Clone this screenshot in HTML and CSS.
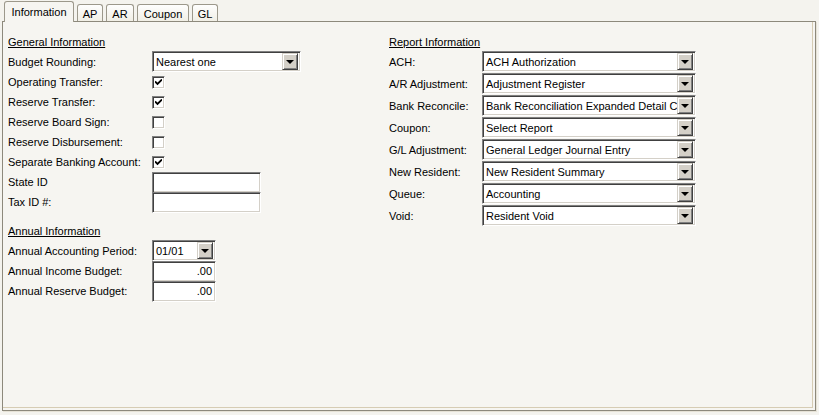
FILE: index.html
```html
<!DOCTYPE html>
<html>
<head>
<meta charset="utf-8">
<link rel="stylesheet" href="styles.css">
</head>
<body>
<div class="window">
  <div class="tabs">
    <div class="tab active t-info">Information</div>
    <div class="tab t-ap">AP</div>
    <div class="tab t-ar">AR</div>
    <div class="tab t-coupon">Coupon</div>
    <div class="tab t-gl">GL</div>
  </div>
  <div class="panel">
    <div class="col left">
      <div class="section">General Information</div>
      <div class="row h21"><span class="lbl">Budget Rounding:</span>
        <div class="select w149"><span class="val">Nearest one</span><span class="btn"><i class="arrow"></i></span></div></div>
      <div class="row h20"><span class="lbl">Operating Transfer:</span><span class="chk"><svg viewBox="0 0 7 7" width="7" height="7"><path d="M0 2.5 L2.5 5 L7 0.5" fill="none" stroke="#000" stroke-width="1.8"/></svg></span></div>
      <div class="row h20"><span class="lbl">Reserve Transfer:</span><span class="chk"><svg viewBox="0 0 7 7" width="7" height="7"><path d="M0 2.5 L2.5 5 L7 0.5" fill="none" stroke="#000" stroke-width="1.8"/></svg></span></div>
      <div class="row h20"><span class="lbl">Reserve Board Sign:</span><span class="chk"></span></div>
      <div class="row h20"><span class="lbl">Reserve Disbursement:</span><span class="chk"></span></div>
      <div class="row h20"><span class="lbl">Separate Banking Account:</span><span class="chk"><svg viewBox="0 0 7 7" width="7" height="7"><path d="M0 2.5 L2.5 5 L7 0.5" fill="none" stroke="#000" stroke-width="1.8"/></svg></span></div>
      <div class="row h20"><span class="lbl">State ID</span><span class="input w109"></span></div>
      <div class="row h20"><span class="lbl">Tax ID #:</span><span class="input w109"></span></div>
      <div class="section s2">Annual Information</div>
      <div class="row h21"><span class="lbl">Annual Accounting Period:</span>
        <div class="select w64"><span class="val">01/01</span><span class="btn"><i class="arrow"></i></span></div></div>
      <div class="row h20"><span class="lbl">Annual Income Budget:</span><span class="input w64 num">.00</span></div>
      <div class="row h20"><span class="lbl">Annual Reserve Budget:</span><span class="input w64 num">.00</span></div>
    </div>
    <div class="col right">
      <div class="section">Report Information</div>
      <div class="row h22"><span class="lbl">ACH:</span><div class="select w214"><span class="val">ACH Authorization</span><span class="btn"><i class="arrow"></i></span></div></div>
      <div class="row h22"><span class="lbl">A/R Adjustment:</span><div class="select w214"><span class="val">Adjustment Register</span><span class="btn"><i class="arrow"></i></span></div></div>
      <div class="row h22"><span class="lbl">Bank Reconcile:</span><div class="select w214"><span class="val">Bank Reconciliation Expanded Detail Con</span><span class="btn"><i class="arrow"></i></span></div></div>
      <div class="row h22"><span class="lbl">Coupon:</span><div class="select w214"><span class="val">Select Report</span><span class="btn"><i class="arrow"></i></span></div></div>
      <div class="row h22"><span class="lbl">G/L Adjustment:</span><div class="select w214"><span class="val">General Ledger Journal Entry</span><span class="btn"><i class="arrow"></i></span></div></div>
      <div class="row h22"><span class="lbl">New Resident:</span><div class="select w214"><span class="val">New Resident Summary</span><span class="btn"><i class="arrow"></i></span></div></div>
      <div class="row h22"><span class="lbl">Queue:</span><div class="select w214"><span class="val">Accounting</span><span class="btn"><i class="arrow"></i></span></div></div>
      <div class="row h22"><span class="lbl">Void:</span><div class="select w214"><span class="val">Resident Void</span><span class="btn"><i class="arrow"></i></span></div></div>
    </div>
  </div>
</div>
</body>
</html>
```
FILE: styles.css
```css
* { box-sizing: border-box; }
html, body { margin: 0; padding: 0; }
body {
  width: 819px; height: 415px; overflow: hidden;
  background: #f4f3ee;
  font-family: "Liberation Sans", Arial, sans-serif;
  font-size: 11px; color: #000;
}
.window { padding: 2px 3px 4px 2px; height: 415px; display: flex; flex-direction: column; }
.tabs { display: flex; align-items: flex-end; padding-left: 2px; gap: 3px; height: 19px; position: relative; z-index: 2; }
.tab {
  height: 17px; border: 1px solid #9c988b; border-bottom: none;
  border-radius: 3px 3px 0 0;
  background: linear-gradient(#fefefe, #f1efe6);
  display: flex; align-items: center; justify-content: center;
  padding-top: 1px;
}
.tab.active { background: #f6f5f1; margin-bottom: -1px; height: 21px; padding-bottom: 2px; }
.t-info { width: 70px; }
.t-ap { width: 26px; }
.t-ar { width: 28px; }
.t-coupon { width: 52px; }
.t-gl { width: 26px; }
.panel {
  flex: 1; display: flex;
  border: 1px solid #8d897c;
  box-shadow: inset -2px -2px 0 #f6f5f1, inset -3px -3px 0 #d6ccb4, 1px 1px 0 #e6e2d6;
  background: #f6f5f1;
  padding: 11px 0 0 5px;
}
.col { display: flex; flex-direction: column; }
.left { width: 381px; }
.right { width: 310px; }
.section { height: 18px; text-decoration: underline; display: flex; align-items: center; }
.section.s2 { margin-top: 10px; }
.row { display: flex; align-items: center; }
.right .row { align-items: flex-start; }
.right .lbl { line-height: 22px; }
.h20 { height: 20px; }
.h21 { height: 21px; }
.h22 { height: 22px; }
.left .lbl { width: 144px; }
.right .lbl { width: 93px; }
.select, .input, .chk {
  border: 1px solid; border-color: #808080 #ffffff #ffffff #808080;
  box-shadow: inset 1px 1px 0 #404040, inset -1px -1px 0 #d4d0c8;
  background: #fff;
}
.select { height: 21px; display: flex; align-items: center; padding: 2px; }
.select .val { flex: 1; white-space: nowrap; overflow: hidden; padding-left: 1px; }
.btn {
  width: 16px; height: 17px; flex: none; background: #d4d0c8;
  border: 1px solid; border-color: #d4d0c8 #404040 #404040 #d4d0c8;
  box-shadow: inset 1px 1px 0 #fff, inset -1px -1px 0 #808080;
  display: flex; align-items: center; justify-content: center;
}
.arrow { width: 0; height: 0; border-left: 4px solid transparent; border-right: 4px solid transparent; border-top: 4px solid #000; margin-top: 1px; }
.w149 { width: 149px; }
.w64 { width: 64px; }
.w214 { width: 214px; }
.w109 { width: 109px; }
.input { height: 21px; display: flex; align-items: center; padding: 0 3px; }
.input.num { justify-content: flex-end; }
.chk { width: 13px; height: 13px; display: flex; align-items: center; justify-content: center; }
```
